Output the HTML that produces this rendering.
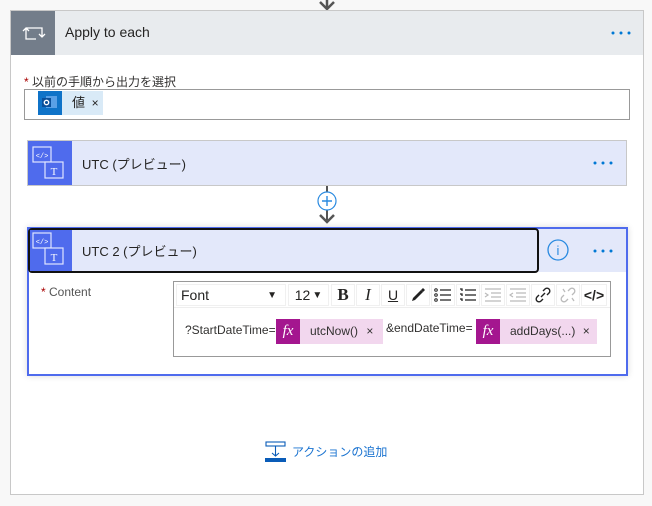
<!DOCTYPE html>
<html><head><meta charset="utf-8"><style>
*{margin:0;padding:0;box-sizing:border-box}
body{width:652px;height:506px;background:#f8f8f8;font-family:"Segoe UI","Liberation Sans","Noto Sans CJK JP",sans-serif;position:relative;overflow:hidden;color:#252423}
.a{position:absolute}
.tb{position:absolute;top:284px;height:22px;background:#fff;border:1px solid #f0f0f0;display:flex;align-items:center;justify-content:center;font-size:15px}
.fx{position:absolute;width:24px;height:25px;background:#a4168f;color:#fff;font-family:"Liberation Serif",serif;font-style:italic;font-size:15px;text-align:center;line-height:24px}
.tok{position:absolute;height:25px;background:#f2d7ee;font-size:12px;line-height:25px;color:#323130}
</style></head><body>
<svg class="a" style="left:317px;top:0" width="20" height="12"><path d="M10 0V9M3 2L10 9L17 2" stroke="#555" stroke-width="2.5" fill="none"/></svg>
<div class="a" style="left:10px;top:10px;width:634px;height:485px;background:#fff;border:1px solid #c8c8c8"></div>
<div class="a" style="left:11px;top:11px;width:632px;height:44px;background:#e8ebee"></div>
<div class="a" style="left:11px;top:11px;width:44px;height:44px;background:#737d8a"></div>
<svg class="a" style="left:22px;top:22px" width="24" height="20"><path d="M4 6H20V15M4 6V17H14M1 9L4 6L7 9M17 12L20 15L23 12" stroke="#fff" stroke-width="1.3" fill="none"/></svg>
<div class="a" style="left:65px;top:24px;font-size:14px">Apply to each</div>
<svg class="a" style="left:610px;top:30px" width="22" height="6"><g fill="#0078d4"><circle cx="3" cy="3" r="1.5"/><circle cx="11" cy="3" r="1.5"/><circle cx="19" cy="3" r="1.5"/></g></svg>
<div class="a" style="left:24px;top:73px;font-size:12px;color:#323130"><span style="color:#a80000">*</span> 以前の手順から出力を選択</div>
<div class="a" style="left:24px;top:89px;width:606px;height:31px;border:1px solid #999;background:#fff"></div>
<div class="a" style="left:38px;top:91px;width:24px;height:24px;background:#0f73c8"></div>
<svg class="a" style="left:41px;top:95px" width="18" height="16"><rect x="5" y="1" width="11" height="12" fill="#5aa0e6"/><rect x="1" y="3" width="9" height="9" fill="#0a4f9a"/><circle cx="5.5" cy="7.5" r="2.2" fill="none" stroke="#fff" stroke-width="1.4"/></svg>
<div class="a" style="left:62px;top:91px;width:41px;height:24px;background:#d9eaf7;font-size:13px;line-height:24px;padding-left:10px">値 <span style="font-size:12px;margin-left:3px">×</span></div>
<div class="a" style="left:27px;top:140px;width:600px;height:46px;background:#e3e8fa;border:1px solid #c8c8c8"></div>
<div class="a" style="left:28px;top:141px;width:44px;height:44px;background:#4f6bed"></div>
<svg class="a" style="left:32px;top:146px" width="36" height="36"><rect x="1" y="1" width="18" height="15" fill="none" stroke="#e0e6ff" stroke-width="1.2"/><rect x="13" y="16" width="18" height="16" fill="#4f6bed" stroke="#e0e6ff" stroke-width="1.2"/><text x="10" y="12" font-size="7" fill="#fff" text-anchor="middle" font-family="Liberation Mono">&lt;/&gt;</text><text x="22" y="29" font-size="11" fill="#fff" text-anchor="middle" font-family="Liberation Serif">T</text></svg>
<div class="a" style="left:82px;top:154px;font-size:13px">UTC (プレビュー)</div>
<svg class="a" style="left:592px;top:160px" width="22" height="6"><g fill="#0078d4"><circle cx="3" cy="3" r="1.5"/><circle cx="11" cy="3" r="1.5"/><circle cx="19" cy="3" r="1.5"/></g></svg>
<div class="a" style="left:326px;top:186px;width:2px;height:34px;background:#555"></div>
<svg class="a" style="left:316px;top:190px" width="22" height="38"><circle cx="11" cy="11" r="9" fill="#fff" stroke="#2a8ae0" stroke-width="1.2"/><path d="M11 6V16M6 11H16" stroke="#2a8ae0" stroke-width="1.4"/><path d="M4 25L11 32L18 25" stroke="#555" stroke-width="2.5" fill="none"/></svg>
<div class="a" style="left:27px;top:227px;width:601px;height:149px;border:2px solid #4f6bed;background:#fff;box-shadow:0 0 6px rgba(0,0,0,.15)"></div>
<div class="a" style="left:29px;top:229px;width:597px;height:43px;background:#e3e8fa"></div>
<div class="a" style="left:28px;top:228px;width:511px;height:45px;border:2px solid #111;border-radius:4px;background:#e3e8fa;overflow:hidden"></div>
<div class="a" style="left:30px;top:230px;width:42px;height:41px;background:#4f6bed"></div>
<svg class="a" style="left:32px;top:232px" width="36" height="36"><rect x="1" y="1" width="18" height="15" fill="none" stroke="#e0e6ff" stroke-width="1.2"/><rect x="13" y="16" width="18" height="16" fill="#4f6bed" stroke="#e0e6ff" stroke-width="1.2"/><text x="10" y="12" font-size="7" fill="#fff" text-anchor="middle" font-family="Liberation Mono">&lt;/&gt;</text><text x="22" y="29" font-size="11" fill="#fff" text-anchor="middle" font-family="Liberation Serif">T</text></svg>
<div class="a" style="left:82px;top:241px;font-size:13px">UTC 2 (プレビュー)</div>
<svg class="a" style="left:547px;top:239px" width="24" height="24"><circle cx="11" cy="11" r="10" fill="none" stroke="#2a8ae0" stroke-width="1.3"/><text x="11" y="16" font-size="13" fill="#2a8ae0" text-anchor="middle" font-family="Liberation Sans">i</text></svg>
<svg class="a" style="left:592px;top:248px" width="22" height="6"><g fill="#0078d4"><circle cx="3" cy="3" r="1.5"/><circle cx="11" cy="3" r="1.5"/><circle cx="19" cy="3" r="1.5"/></g></svg>
<div class="a" style="left:41px;top:285px;font-size:12px;color:#555"><span style="color:#a80000">*</span> Content</div>
<div class="a" style="left:173px;top:281px;width:438px;height:76px;border:1px solid #999;background:#fff"></div>
<div class="a" style="left:174px;top:282px;width:436px;height:26px;border-bottom:1px solid #eee"></div>
<div class="tb" style="left:176px;width:110px;justify-content:space-between;padding:0 8px 0 4px;font-size:14px"><span>Font</span><span style="font-size:10px">▼</span></div>
<div class="tb" style="left:288px;width:41px;font-size:14px">12<span style="font-size:10px;margin-left:2px">▼</span></div>
<div class="tb" style="left:331px;width:24px;font-family:'Liberation Serif';font-weight:bold;font-size:17px">B</div>
<div class="tb" style="left:356px;width:24px;font-family:'Liberation Serif';font-style:italic;font-size:17px">I</div>
<div class="tb" style="left:381px;width:24px;text-decoration:underline;font-size:14px">U</div>
<div class="tb" style="left:406px;width:24px"><svg width="16" height="16"><path d="M2 14L5 13L13 5L11 3L3 11Z" fill="#222"/><path d="M11 3L13 1L15 3L13 5" fill="#222"/></svg></div>
<div class="tb" style="left:431px;width:24px"><svg width="18" height="14"><g fill="none" stroke="#222"><circle cx="2" cy="2" r="1.3"/><circle cx="2" cy="7" r="1.3"/><circle cx="2" cy="12" r="1.3"/></g><path d="M6 2H17M6 7H17M6 12H17" stroke="#222" stroke-width="1.3"/></svg></div>
<div class="tb" style="left:456px;width:24px"><svg width="18" height="14"><path d="M1 1H3V3M1 6H3V8M1 11H3V13M6 2H17M6 7H17M6 12H17" stroke="#222" stroke-width="1.3" fill="none"/></svg></div>
<div class="tb" style="left:481px;width:24px"><svg width="18" height="14"><path d="M1 1H17M7 5H17M7 9H17M1 13H17M1 5L4 7L1 9" stroke="#bbb" stroke-width="1.2" fill="none"/></svg></div>
<div class="tb" style="left:506px;width:24px"><svg width="18" height="14"><path d="M1 1H17M7 5H17M7 9H17M1 13H17M4 5L1 7L4 9" stroke="#bbb" stroke-width="1.2" fill="none"/></svg></div>
<div class="tb" style="left:531px;width:24px"><svg width="16" height="16"><path d="M6 10L10 6M4 8L2 10A2.5 2.5 0 0 0 6 14L8 12M8 4L10 2A2.5 2.5 0 0 1 14 6L12 8" stroke="#222" stroke-width="1.4" fill="none"/></svg></div>
<div class="tb" style="left:556px;width:24px"><svg width="16" height="16"><path d="M4 8L2 10A2.5 2.5 0 0 0 6 14L8 12M8 4L10 2A2.5 2.5 0 0 1 14 6L12 8M3 2L5 5M12 11L14 14" stroke="#bbb" stroke-width="1.3" fill="none"/></svg></div>
<div class="tb" style="left:581px;width:26px;font-weight:bold;font-size:14px">&lt;/&gt;</div>
<div class="a" style="left:185px;top:323px;font-size:12px;color:#323130">?StartDateTime=</div>
<div class="fx" style="left:276px;top:319px">fx</div>
<div class="tok" style="left:300px;top:319px;width:83px;padding-left:10px">utcNow() <span style="margin-left:5px">×</span></div>
<div class="a" style="left:386px;top:321px;font-size:12px;color:#323130">&amp;endDateTime=</div>
<div class="fx" style="left:476px;top:319px">fx</div>
<div class="tok" style="left:500px;top:319px;width:97px;padding-left:10px">addDays(...) <span style="margin-left:4px">×</span></div>
<svg class="a" style="left:265px;top:441px" width="22" height="21"><rect x="1" y="1" width="19" height="4" fill="none" stroke="#0a5cb8" stroke-width="1.1"/><path d="M10.5 5V15M7 12L10.5 15L14 12" stroke="#0a5cb8" stroke-width="1.1" fill="none"/><rect x="0" y="17" width="21" height="4" fill="#0a5cb8"/></svg>
<div class="a" style="left:292px;top:443px;font-size:12px;color:#1a73d0">アクションの追加</div>
</body></html>
